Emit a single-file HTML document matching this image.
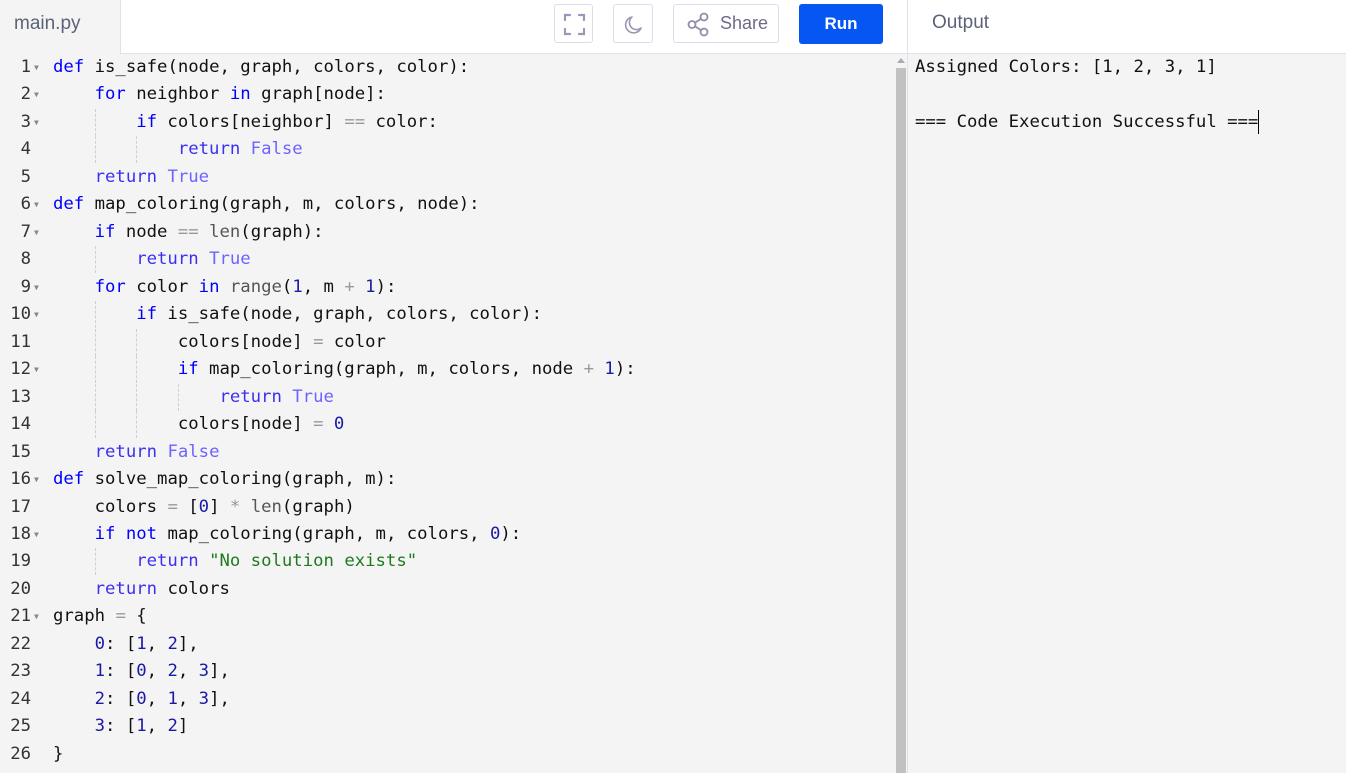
<!DOCTYPE html>
<html><head><meta charset="utf-8"><style>
*{margin:0;padding:0;box-sizing:border-box}
body{width:1346px;height:773px;overflow:hidden;background:#f4f4f4;font-family:"Liberation Sans",sans-serif;position:relative}
.hdr{position:absolute;left:0;top:0;width:1346px;height:54px;background:#fff;border-bottom:1px solid #dde3ee}
.tab{position:absolute;left:0;top:0;width:121px;height:54px;background:#f4f4f4;border-right:1px solid #dde3ee;color:#5b6378;font-size:19px;padding:13px 0 0 14px}
.btn{position:absolute;top:4px;height:39px;border:1px solid #d9dfea;border-radius:3px;background:#fff}
.run{position:absolute;left:799px;top:4px;width:84px;height:40px;background:#0556f3;border-radius:3px;color:#fff;font-weight:bold;font-size:17px;text-align:center;line-height:40px}
.out{position:absolute;left:932px;top:12px;font-size:19px;color:#5b6378}
.vd{position:absolute;left:907px;top:0;width:1px;height:773px;background:#dde3ee}
.code{position:absolute;left:0;top:54px;font-family:"DejaVu Sans Mono","Liberation Mono",monospace;font-size:17.3px;color:#111}
.l{height:27.48px;line-height:27.48px;white-space:pre;position:relative}
.ln{position:absolute;left:0;width:31px;text-align:right;color:#333}
.ar{position:absolute;left:34px;top:0;font-size:8px;color:#888}
.c{position:absolute;left:53px}
.g{display:inline-block;width:4ch;height:27px;vertical-align:top}
.g+.g{border-left:1px dashed #cfcfcf}
.k{color:#0000ff}.r{color:#3b30f0}.b{color:#6d63ff}.n{color:#1a1aa6}.s{color:#1f7a1f}.o{color:#999}.f{color:#555}
.sb{position:absolute;left:896px;top:68px;width:10px;height:705px;background:#c1c1c1}
.sa{position:absolute;left:897px;top:58px;width:0;height:0;border-left:4px solid transparent;border-right:4px solid transparent;border-bottom:5px solid #aaa}
.o2{position:absolute;left:915px;top:54px;font-family:"DejaVu Sans Mono","Liberation Mono",monospace;font-size:17.3px;color:#111;line-height:27.48px;white-space:pre}
.cur{display:inline-block;width:1px;height:24px;background:#000;vertical-align:middle}
</style></head><body>
<div class="hdr">
<div class="tab">main.py</div>
<div class="btn" style="left:554px;width:39px"><svg width="39" height="39" viewBox="0 0 39 39"><path d="M10 15V10H15M24 10H29V15M29 24V29H24M15 29H10V24" fill="none" stroke="#9a98b5" stroke-width="2.2" stroke-linecap="round"/></svg></div>
<div class="btn" style="left:613px;width:40px"><svg width="40" height="39" viewBox="0 0 40 39"><path d="M18 12A8 8 0 1 0 27 23A6.5 6.5 0 0 1 18 12Z" fill="none" stroke="#9a98b5" stroke-width="1.6" stroke-linejoin="round"/></svg></div>
<div class="btn" style="left:673px;width:106px"><svg width="30" height="39" viewBox="0 0 30 39" style="position:absolute;left:9px;top:0"><circle cx="21" cy="12" r="3.5" fill="none" stroke="#8f8da8" stroke-width="1.8"/><circle cx="9" cy="19.5" r="3.5" fill="none" stroke="#8f8da8" stroke-width="1.8"/><circle cx="21" cy="27" r="3.5" fill="none" stroke="#8f8da8" stroke-width="1.8"/><path d="M12 17.6L18 13.9M12 21.4L18 25.1" stroke="#8f8da8" stroke-width="1.8"/></svg><span style="position:absolute;left:46px;top:8px;font-size:18px;color:#6d6b88">Share</span></div>
<div class="run">Run</div>
<div class="out">Output</div>
</div>
<div class="vd"></div>
<div class="code">
<div class="l"><span class="ln">1</span><span class="ar">▼</span><span class="c"><span class="k">def</span> is_safe(node, graph, colors, color):</span></div>
<div class="l"><span class="ln">2</span><span class="ar">▼</span><span class="c"><i class="g"></i><span class="k">for</span> neighbor <span class="k">in</span> graph[node]:</span></div>
<div class="l"><span class="ln">3</span><span class="ar">▼</span><span class="c"><i class="g"></i><i class="g"></i><span class="k">if</span> colors[neighbor] <span class="o">==</span> color:</span></div>
<div class="l"><span class="ln">4</span><span class="c"><i class="g"></i><i class="g"></i><i class="g"></i><span class="r">return</span> <span class="b">False</span></span></div>
<div class="l"><span class="ln">5</span><span class="c"><i class="g"></i><span class="r">return</span> <span class="b">True</span></span></div>
<div class="l"><span class="ln">6</span><span class="ar">▼</span><span class="c"><span class="k">def</span> map_coloring(graph, m, colors, node):</span></div>
<div class="l"><span class="ln">7</span><span class="ar">▼</span><span class="c"><i class="g"></i><span class="k">if</span> node <span class="o">==</span> <span class="f">len</span>(graph):</span></div>
<div class="l"><span class="ln">8</span><span class="c"><i class="g"></i><i class="g"></i><span class="r">return</span> <span class="b">True</span></span></div>
<div class="l"><span class="ln">9</span><span class="ar">▼</span><span class="c"><i class="g"></i><span class="k">for</span> color <span class="k">in</span> <span class="f">range</span>(<span class="n">1</span>, m <span class="o">+</span> <span class="n">1</span>):</span></div>
<div class="l"><span class="ln">10</span><span class="ar">▼</span><span class="c"><i class="g"></i><i class="g"></i><span class="k">if</span> is_safe(node, graph, colors, color):</span></div>
<div class="l"><span class="ln">11</span><span class="c"><i class="g"></i><i class="g"></i><i class="g"></i>colors[node] <span class="o">=</span> color</span></div>
<div class="l"><span class="ln">12</span><span class="ar">▼</span><span class="c"><i class="g"></i><i class="g"></i><i class="g"></i><span class="k">if</span> map_coloring(graph, m, colors, node <span class="o">+</span> <span class="n">1</span>):</span></div>
<div class="l"><span class="ln">13</span><span class="c"><i class="g"></i><i class="g"></i><i class="g"></i><i class="g"></i><span class="r">return</span> <span class="b">True</span></span></div>
<div class="l"><span class="ln">14</span><span class="c"><i class="g"></i><i class="g"></i><i class="g"></i>colors[node] <span class="o">=</span> <span class="n">0</span></span></div>
<div class="l"><span class="ln">15</span><span class="c"><i class="g"></i><span class="r">return</span> <span class="b">False</span></span></div>
<div class="l"><span class="ln">16</span><span class="ar">▼</span><span class="c"><span class="k">def</span> solve_map_coloring(graph, m):</span></div>
<div class="l"><span class="ln">17</span><span class="c"><i class="g"></i>colors <span class="o">=</span> [<span class="n">0</span>] <span class="o">*</span> <span class="f">len</span>(graph)</span></div>
<div class="l"><span class="ln">18</span><span class="ar">▼</span><span class="c"><i class="g"></i><span class="k">if not</span> map_coloring(graph, m, colors, <span class="n">0</span>):</span></div>
<div class="l"><span class="ln">19</span><span class="c"><i class="g"></i><i class="g"></i><span class="r">return</span> <span class="s">"No solution exists"</span></span></div>
<div class="l"><span class="ln">20</span><span class="c"><i class="g"></i><span class="r">return</span> colors</span></div>
<div class="l"><span class="ln">21</span><span class="ar">▼</span><span class="c">graph <span class="o">=</span> {</span></div>
<div class="l"><span class="ln">22</span><span class="c"><i class="g"></i><span class="n">0</span>: [<span class="n">1</span>, <span class="n">2</span>],</span></div>
<div class="l"><span class="ln">23</span><span class="c"><i class="g"></i><span class="n">1</span>: [<span class="n">0</span>, <span class="n">2</span>, <span class="n">3</span>],</span></div>
<div class="l"><span class="ln">24</span><span class="c"><i class="g"></i><span class="n">2</span>: [<span class="n">0</span>, <span class="n">1</span>, <span class="n">3</span>],</span></div>
<div class="l"><span class="ln">25</span><span class="c"><i class="g"></i><span class="n">3</span>: [<span class="n">1</span>, <span class="n">2</span>]</span></div>
<div class="l"><span class="ln">26</span><span class="c">}</span></div>
</div>
<div class="sa"></div>
<div class="sb"></div>
<div class="o2">Assigned Colors: [1, 2, 3, 1]

=== Code Execution Successful ===<span class="cur"></span></div>
</body></html>
